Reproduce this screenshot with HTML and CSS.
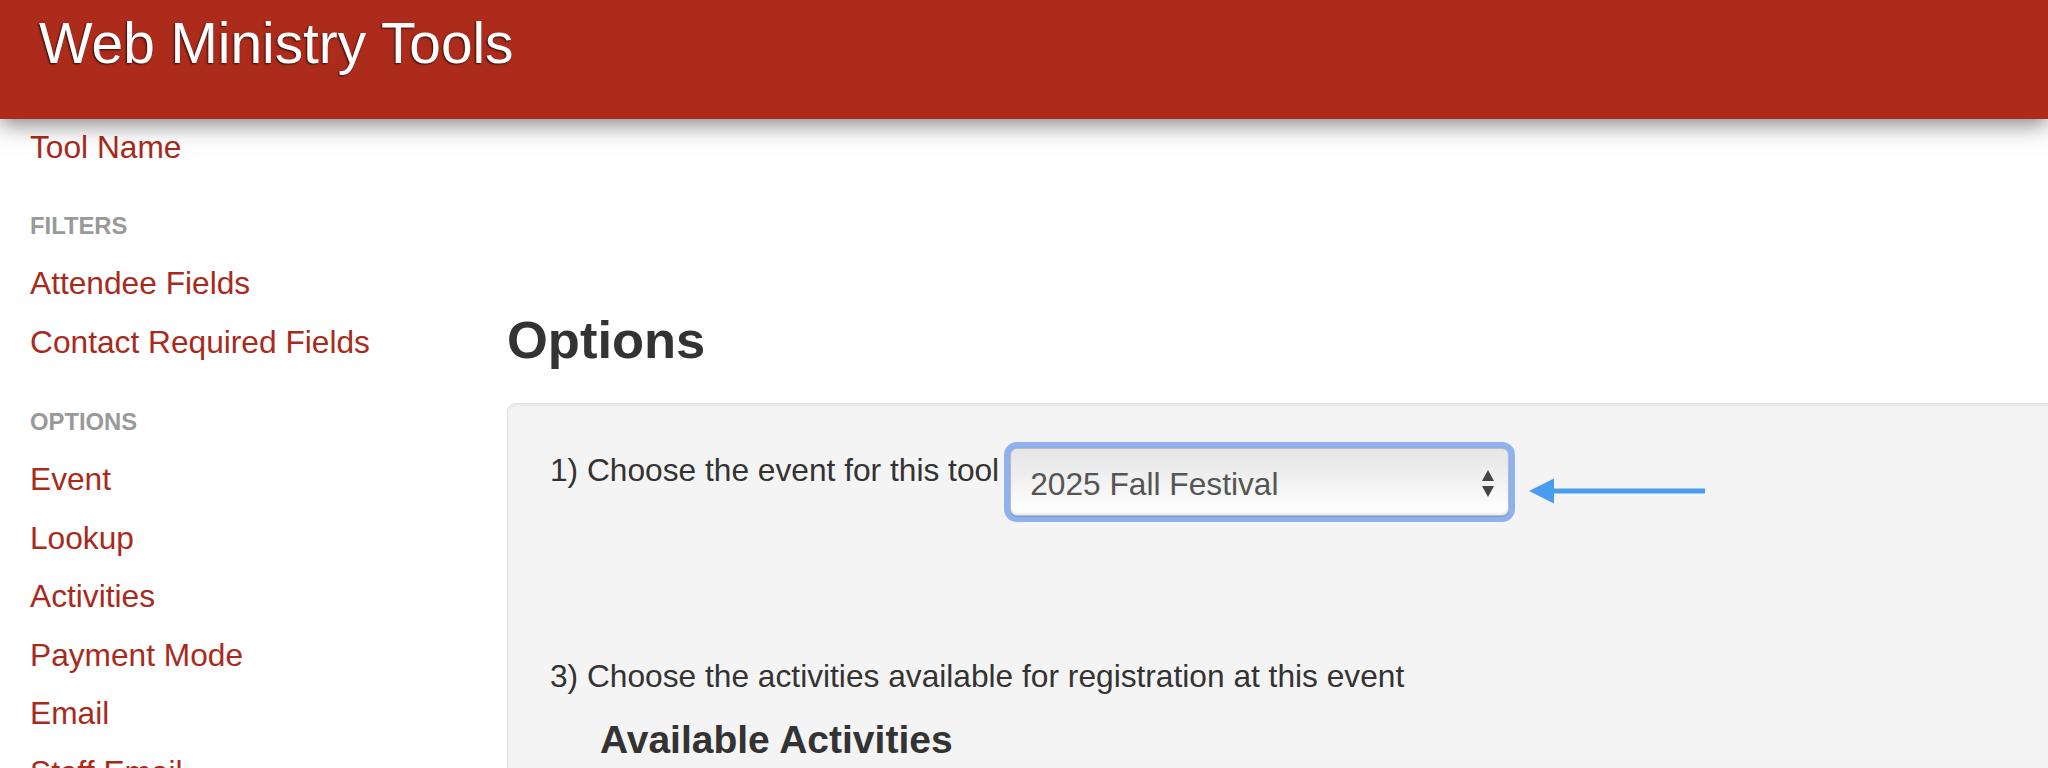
FILE: index.html
```html
<!DOCTYPE html>
<html lang="en">
<head>
<meta charset="utf-8">
<title>Web Ministry Tools</title>
<link rel="stylesheet" href="styles.css">
</head>
<body>
<header class="topbar">
  <div class="brand">Web Ministry Tools</div>
</header>
<div class="layout">
  <nav class="sidebar">
    <a class="nav-link first" href="#">Tool Name</a>
    <div class="nav-header">FILTERS</div>
    <a class="nav-link" href="#">Attendee Fields</a>
    <a class="nav-link" href="#">Contact Required Fields</a>
    <div class="nav-header">OPTIONS</div>
    <a class="nav-link" href="#">Event</a>
    <a class="nav-link" href="#">Lookup</a>
    <a class="nav-link" href="#">Activities</a>
    <a class="nav-link" href="#">Payment Mode</a>
    <a class="nav-link" href="#">Email</a>
    <a class="nav-link" href="#">Staff Email</a>
  </nav>
  <main class="content">
    <h1 class="page-title">Options</h1>
    <section class="well">
      <div class="row-event">
        <span class="label">1) Choose the event for this tool</span>
        <div class="select-ring">
          <div class="select-box">
            <span class="select-value">2025 Fall Festival</span>
            <span class="select-arrows"><span class="up"></span><span class="down"></span></span>
          </div>
        </div>
        <svg class="pointer" width="176" height="26" viewBox="0 0 176 26" aria-hidden="true">
          <polygon points="0,13 25,0.5 25,25.5" fill="#4a9cee"/>
          <rect x="20" y="10.5" width="156" height="5" fill="#4a9cee"/>
        </svg>
      </div>
      <p class="label step3">3) Choose the activities available for registration at this event</p>
      <h3 class="sub-title">Available Activities</h3>
    </section>
  </main>
</div>
</body>
</html>
```

FILE: styles.css
```css
html, body {
  margin: 0;
  padding: 0;
  background: #ffffff;
  overflow: hidden;
}

body {
  font-family: "Liberation Sans", Arial, Helvetica, sans-serif;
  color: #333333;
  width: 2048px;
  height: 768px;
}

.topbar {
  position: relative;
  z-index: 2;
  height: 119px;
  box-sizing: border-box;
  padding: 12px 0 0 39px;
  background: #ad2b1b;
  box-shadow: 0 5px 22px rgba(0, 0, 0, 0.5);
}

.brand {
  font-size: 56.8px;
  line-height: 64px;
  color: #ffffff;
  text-shadow: -1px 1px 2px rgba(0, 0, 0, 0.75);
}

.layout {
  display: flex;
}

.sidebar {
  width: 477px;
  flex: none;
  padding-left: 30px;
  display: flex;
  flex-direction: column;
  align-items: flex-start;
}

.nav-link {
  display: block;
  font-size: 31.7px;
  line-height: 58.5px;
  color: #a92a1c;
  text-decoration: none;
  white-space: nowrap;
}

.nav-link.first {
  line-height: 56px;
}

.nav-header {
  margin: 36px 0 13px;
  font-size: 23.8px;
  line-height: 30px;
  font-weight: bold;
  color: #999999;
}

.content {
  flex: 1;
  padding-top: 191px;
  min-width: 0;
}

.page-title {
  margin: 0;
  font-size: 52.5px;
  line-height: 60px;
  font-weight: bold;
  color: #333333;
}

.well {
  margin: 33px -30px 0 0;
  min-height: 500px;
  box-sizing: border-box;
  padding: 38px 0 0 42px;
  background: #f4f4f4;
  border: 1px solid #e3e3e3;
  border-radius: 9px;
  box-shadow: inset 0 2px 3px rgba(0, 0, 0, 0.05);
}

.row-event {
  display: flex;
  align-items: flex-start;
}

.label {
  font-size: 31.7px;
  line-height: 40px;
  color: #333333;
  white-space: nowrap;
}

.row-event .label {
  margin-top: 8px;
}

.select-ring {
  margin-left: 5px;
  width: 511px;
  height: 80px;
  box-sizing: border-box;
  padding: 6px;
  border-radius: 13px;
  background: #8fb1ee;
}

.select-box {
  height: 100%;
  box-sizing: border-box;
  display: flex;
  align-items: center;
  justify-content: space-between;
  padding: 0 14px 0 19px;
  border: 1px solid #bdbdbd;
  border-radius: 7px;
  background: linear-gradient(#e6e6e6 0%, #f0f0f0 45%, #fdfdfd 85%, #ffffff 100%);
  box-shadow: inset 0 -2px 2px rgba(0, 0, 0, 0.08), 0 1px 1px rgba(0, 0, 0, 0.15);
}

.select-value {
  font-size: 31.7px;
  line-height: 40px;
  color: #555555;
  margin-top: 3px;
}

.select-arrows {
  display: flex;
  flex-direction: column;
  align-items: center;
  gap: 5px;
  margin-top: 2px;
}

.select-arrows .up {
  width: 0;
  height: 0;
  border-left: 6.5px solid transparent;
  border-right: 6.5px solid transparent;
  border-bottom: 11px solid #444444;
}

.select-arrows .down {
  width: 0;
  height: 0;
  border-left: 6.5px solid transparent;
  border-right: 6.5px solid transparent;
  border-top: 11px solid #444444;
}

.pointer {
  flex: none;
  margin: 36px 0 0 14px;
}

.step3 {
  margin: 134px 0 0;
}

.sub-title {
  margin: 21px 0 0 50px;
  font-size: 39px;
  line-height: 46px;
  font-weight: bold;
  color: #333333;
}
```
